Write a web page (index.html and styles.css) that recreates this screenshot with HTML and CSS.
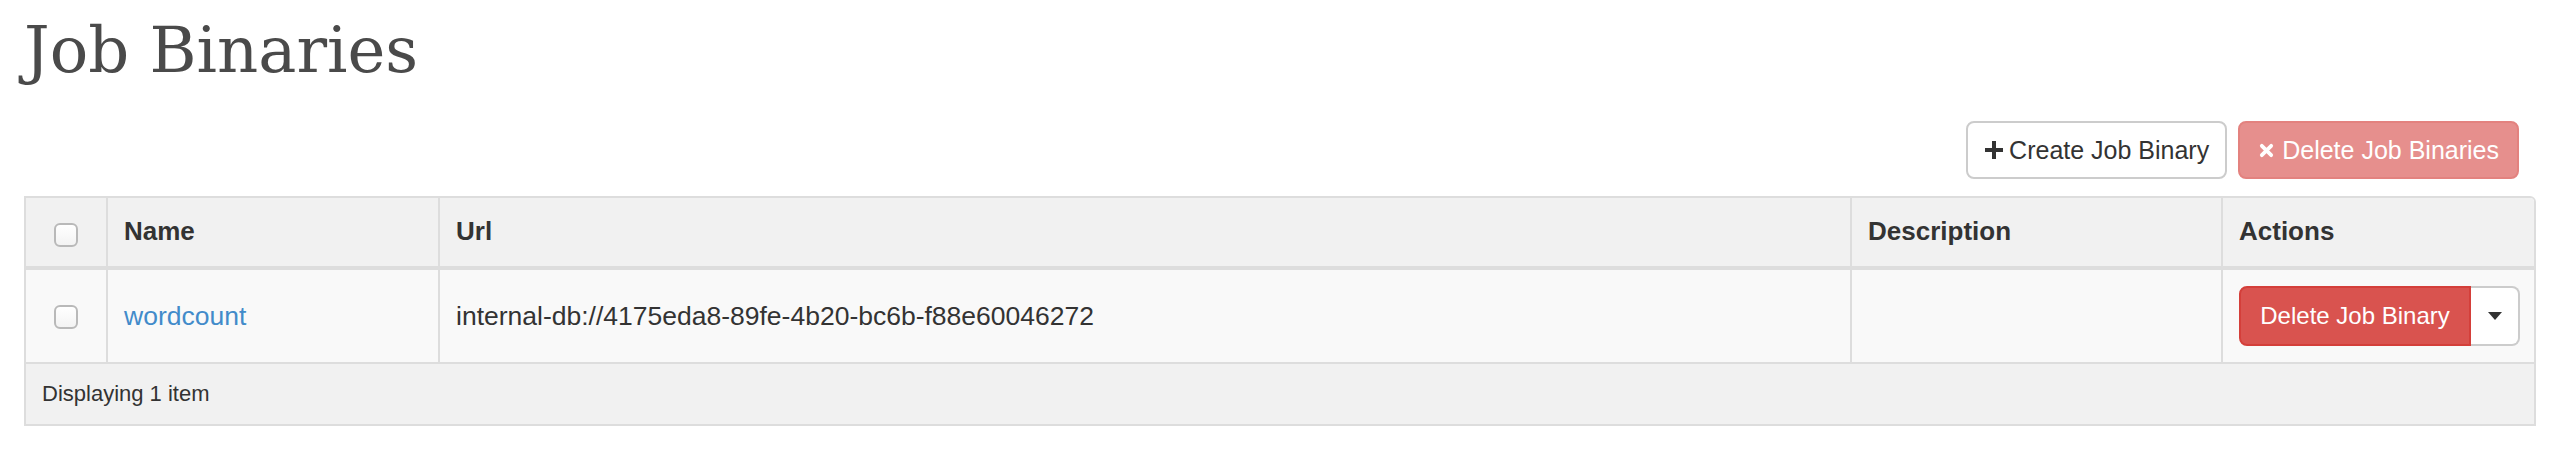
FILE: index.html
```html
<!DOCTYPE html>
<html lang="en">
<head>
<meta charset="utf-8">
<title>Job Binaries</title>
<link rel="stylesheet" href="styles.css">
</head>
<body>
<div class="page">
  <h1 class="page-title">Job Binaries</h1>

  <div class="toolbar">
    <button class="btn btn-default" type="button">
      <svg class="icon icon-plus" viewBox="0 0 18 18" width="18" height="18" aria-hidden="true"><path d="M7 0h4v7h7v4h-7v7h-4v-7h-7v-4h7z" fill="#333"/></svg>
      <span>Create Job Binary</span>
    </button>
    <button class="btn btn-danger-disabled" type="button">
      <svg class="icon icon-x" viewBox="0 0 16 16" width="15" height="15" aria-hidden="true"><path d="M3 3L13 13M13 3L3 13" stroke="#fff" stroke-width="4" stroke-linecap="round"/></svg>
      <span>Delete Job Binaries</span>
    </button>
  </div>

  <div class="datatable">
    <div class="dt-row dt-head">
      <div class="dt-cell dt-check"><span class="checkbox checkbox-head"></span></div>
      <div class="dt-cell">Name</div>
      <div class="dt-cell">Url</div>
      <div class="dt-cell">Description</div>
      <div class="dt-cell">Actions</div>
    </div>
    <div class="dt-row dt-body">
      <div class="dt-cell dt-check"><span class="checkbox"></span></div>
      <div class="dt-cell"><a class="link" href="#">wordcount</a></div>
      <div class="dt-cell">internal-db://4175eda8-89fe-4b20-bc6b-f88e60046272</div>
      <div class="dt-cell"></div>
      <div class="dt-cell">
        <div class="btn-group">
          <button class="btn-row-danger" type="button">Delete Job Binary</button>
          <button class="btn-caret" type="button"><span class="caret"></span></button>
        </div>
      </div>
    </div>
    <div class="dt-foot">Displaying 1 item</div>
  </div>
</div>
</body>
</html>
```

FILE: styles.css
```css
* {
  box-sizing: border-box;
}

body {
  margin: 0;
  background: #ffffff;
  color: #333333;
  font-family: "Liberation Sans", Arial, Helvetica, sans-serif;
}

.page {
  padding: 0 16px 0 24px;
}

.page-title {
  margin: 10px 0 0;
  font-family: "DejaVu Serif", "Liberation Serif", serif;
  font-weight: 400;
  font-size: 64px;
  line-height: 80px;
  color: #4a4a4a;
}

.toolbar {
  display: flex;
  justify-content: flex-end;
  gap: 11px;
  margin-top: 31px;
  padding-right: 17px;
}

.btn {
  display: inline-flex;
  align-items: center;
  gap: 7px;
  height: 58px;
  padding: 0 18px;
  border: 2px solid #cccccc;
  border-radius: 8px;
  background: #ffffff;
  color: #333333;
  font-family: "Liberation Sans", Arial, sans-serif;
  font-size: 25px;
  line-height: 1;
  cursor: pointer;
}

.btn-default {
  gap: 6px;
  padding: 0 16px 0 17px;
}

.btn-danger-disabled {
  background: #e68f8d;
  border-color: #e3827f;
  color: #ffffff;
  gap: 8px;
  padding: 0 18px 0 19px;
}

.icon {
  display: block;
  flex: none;
}

.datatable {
  margin-top: 17px;
  border: 2px solid #dddddd;
  border-top-right-radius: 6px;
  overflow: hidden;
}

.dt-row {
  display: grid;
  grid-template-columns: 80px 332px 1412px 371px 313px;
}

.dt-cell {
  display: flex;
  align-items: center;
  padding: 0 16px;
  border-left: 2px solid #dddddd;
  font-size: 26px;
  white-space: nowrap;
}

.dt-cell.dt-check {
  border-left: none;
  justify-content: center;
  padding: 0;
}

.dt-head {
  height: 72px;
  background: #f1f1f1;
  border-bottom: 4px solid #dddddd;
}

.dt-head .dt-cell {
  font-weight: 700;
  padding-bottom: 2px;
}

.dt-body {
  height: 94px;
  background: #f9f9f9;
  border-bottom: 2px solid #dddddd;
}

.dt-body .dt-cell {
  font-size: 26.5px;
}

.dt-foot {
  height: 60px;
  display: flex;
  align-items: center;
  padding: 0 16px;
  background: #f1f1f1;
  font-size: 22px;
}

.checkbox {
  display: block;
  width: 24px;
  height: 24px;
  border: 2px solid #b9b9b9;
  border-radius: 6px;
  background: linear-gradient(#ffffff, #f3f3f3);
  margin-top: 2px;
}

.checkbox-head {
  margin-top: 8px;
}

.link {
  color: #428bca;
  text-decoration: none;
}

.btn-group {
  display: flex;
  height: 60px;
}

.btn-row-danger {
  width: 232px;
  height: 60px;
  padding: 0;
  border: 2px solid #d43f3a;
  border-radius: 8px 0 0 8px;
  background: #d9534f;
  color: #ffffff;
  font-family: "Liberation Sans", Arial, sans-serif;
  font-size: 24px;
  cursor: pointer;
}

.btn-caret {
  display: flex;
  align-items: center;
  justify-content: center;
  width: 49px;
  height: 60px;
  padding: 0;
  border: 2px solid #cccccc;
  border-left: none;
  border-radius: 0 8px 8px 0;
  background: #ffffff;
  cursor: pointer;
}

.caret {
  display: block;
  width: 0;
  height: 0;
  border-top: 8px solid #333333;
  border-left: 7px solid transparent;
  border-right: 7px solid transparent;
}
```
